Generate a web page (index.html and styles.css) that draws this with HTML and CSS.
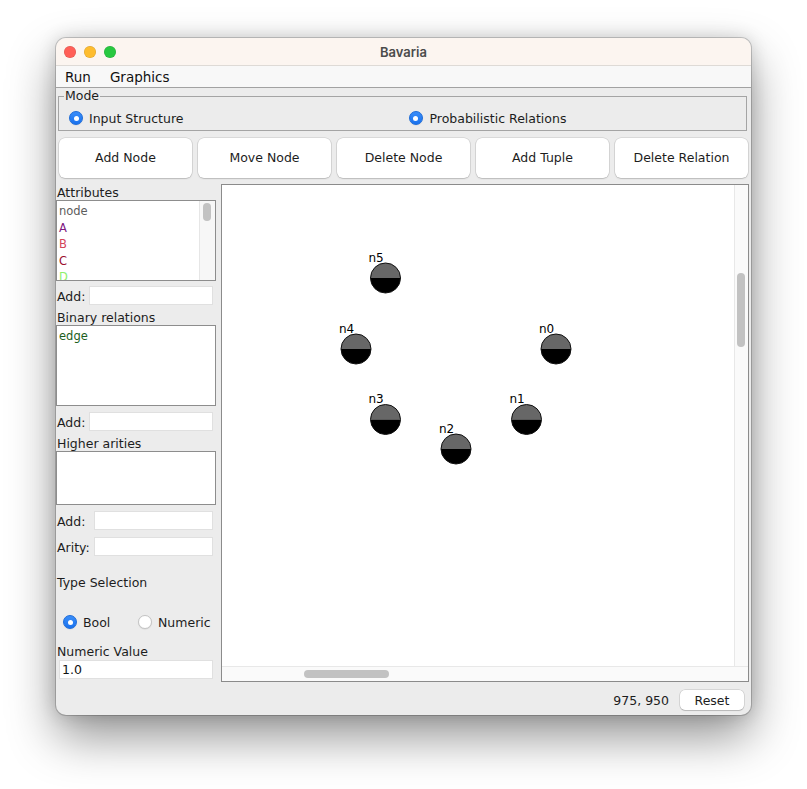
FILE: index.html
```html
<!DOCTYPE html>
<html>
<head>
<meta charset="utf-8">
<title>Bavaria</title>
<link rel="stylesheet" href="styles.css">
</head>
<body>
<div class="desk">
<div class="window">
  <div class="titlebar">
    <div class="lights">
      <span class="light red"></span>
      <span class="light yellow"></span>
      <span class="light green"></span>
    </div>
    <div class="title">Bavaria</div>
    <div></div>
  </div>
  <div class="menubar">
    <span class="menu">Run</span>
    <span class="menu">Graphics</span>
  </div>
  <div class="content">
    <fieldset class="mode">
      <legend>Mode</legend>
      <div class="mode-row">
        <div class="radio first"><span class="rb on"></span><span>Input Structure</span></div>
        <div class="radio second"><span class="rb on"></span><span>Probabilistic Relations</span></div>
      </div>
    </fieldset>
    <div class="toolbar">
      <button class="btn">Add Node</button>
      <button class="btn">Move Node</button>
      <button class="btn">Delete Node</button>
      <button class="btn">Add Tuple</button>
      <button class="btn">Delete Relation</button>
    </div>
    <div class="main">
      <div class="side">
        <div class="cap">Attributes</div>
        <div class="list list-attr">
          <div class="items">
            <div class="item c-node">node</div>
            <div class="item c-a">A</div>
            <div class="item c-b">B</div>
            <div class="item c-c">C</div>
            <div class="item c-d">D</div>
          </div>
          <div class="vtrack-s"><div class="vthumb-s"></div></div>
        </div>
        <div class="row r1"><span class="k">Add:</span><input class="tf" type="text" value=""></div>
        <div class="cap cap2">Binary relations</div>
        <div class="list list-bin">
          <div class="items">
            <div class="item c-edge">edge</div>
          </div>
        </div>
        <div class="row r2"><span class="k">Add:</span><input class="tf" type="text" value=""></div>
        <div class="cap cap2">Higher arities</div>
        <div class="list list-hi"></div>
        <div class="row r3 wide"><span class="k">Add:</span><input class="tf" type="text" value=""></div>
        <div class="row r4 wide"><span class="k">Arity:</span><input class="tf" type="text" value=""></div>
        <div class="cap cap-type">Type Selection</div>
        <div class="type-row">
          <div class="radio"><span class="rb on"></span><span>Bool</span></div>
          <div class="radio"><span class="rb"></span><span>Numeric</span></div>
        </div>
        <div class="cap cap-num">Numeric Value</div>
        <input class="tf tf-num" type="text" value="1.0">
      </div>
      <div class="canvas">
        <div class="viewport">
          <svg class="graph" width="512" height="481" viewBox="0 0 512 481">
            <defs>
              <g id="node">
                <path d="M-15,0 A15,15 0 0 1 15,0 Z" fill="#676767"/>
                <path d="M-15,0 A15,15 0 0 0 15,0 Z" fill="#000"/>
                <circle r="15" fill="none" stroke="#111" stroke-width="1"/>
              </g>
            </defs>
            <use href="#node" x="163.5" y="93"/>
            <text x="146.5" y="77">n5</text>
            <use href="#node" x="134" y="164"/>
            <text x="117" y="148">n4</text>
            <use href="#node" x="334" y="164"/>
            <text x="317" y="148">n0</text>
            <use href="#node" x="163.5" y="234.5"/>
            <text x="146.5" y="218">n3</text>
            <use href="#node" x="304.5" y="234.5"/>
            <text x="287.5" y="218">n1</text>
            <use href="#node" x="234" y="264"/>
            <text x="217" y="248">n2</text>
          </svg>
        </div>
        <div class="vtrack"><div class="vthumb"></div></div>
        <div class="htrack"><div class="hthumb"></div></div>
      </div>
    </div>
    <div class="status">
      <span class="coords">975, 950</span>
      <button class="reset">Reset</button>
    </div>
  </div>
</div>
</div>
</body>
</html>
```

FILE: styles.css
```css
* { box-sizing: border-box; }

html, body {
  margin: 0;
  background: #ffffff;
}

body {
  font-family: "DejaVu Sans", "Liberation Sans", sans-serif;
  color: #1d1d1d;
}

.desk {
  width: 807px;
  height: 789px;
  padding: 38px 0 0 56px;
  overflow: hidden;
}

.window {
  width: 695px;
  height: 677px;
  border-radius: 10px;
  background: #ececec;
  overflow: hidden;
  display: flex;
  flex-direction: column;
  box-shadow: 0 0 0 1px rgba(0,0,0,0.18), 0 22px 48px rgba(0,0,0,0.42), 0 0 18px rgba(0,0,0,0.16);
}

.titlebar {
  height: 28px;
  flex: none;
  background: #fcf5f0;
  border-bottom: 1px solid #dedad6;
  display: grid;
  grid-template-columns: 1fr auto 1fr;
  align-items: center;
}

.lights {
  display: flex;
  gap: 8px;
  padding-left: 8px;
}

.light {
  width: 12px;
  height: 12px;
  border-radius: 50%;
  box-shadow: inset 0 0 0 0.5px rgba(0,0,0,0.15);
}
.red { background: #ff5f57; }
.yellow { background: #febc2e; }
.green { background: #28c840; }

.title {
  font-family: "Inter", "DejaVu Sans", sans-serif;
  font-weight: 600;
  font-size: 13px;
  color: #4b4b4b;
}

.menubar {
  height: 22px;
  flex: none;
  background: #f8f8f8;
  border-bottom: 1px solid #a2a2a2;
  display: flex;
  align-items: center;
  gap: 19px;
  padding-left: 9px;
  font-size: 13.5px;
  color: #111;
}

.content {
  flex: 1;
  display: flex;
  flex-direction: column;
}

.mode {
  margin: 1px 4px 0 2px;
  padding: 0;
  border: 1px solid #a4a4a4;
  min-width: 0;
  font-size: 12.5px;
}

.mode legend {
  margin-left: 5px;
  padding: 0 1px;
  font-size: 12.5px;
  line-height: 14px;
}

.mode-row {
  display: grid;
  grid-template-columns: 1fr 1fr;
  height: 18px;
  margin: 6px 0 3px 0;
}

.radio {
  display: flex;
  align-items: center;
  gap: 6px;
  font-size: 12.5px;
  white-space: nowrap;
}
.mode-row .first { padding-left: 10px; }
.mode-row .second { padding-left: 6px; }
.mode-row .second .rb { margin-right: 1px; }

.rb {
  position: relative;
  width: 14px;
  height: 14px;
  border-radius: 50%;
  flex: none;
  background: #ffffff;
  border: 1px solid #c4c4c4;
  box-shadow: 0 0.5px 1px rgba(0,0,0,0.1);
}
.rb.on {
  background: linear-gradient(#3a8ef9, #1a72ee);
  border: 1px solid #1b6ad8;
}
.rb.on::after {
  content: "";
  position: absolute;
  left: 3.5px;
  top: 3.5px;
  width: 5px;
  height: 5px;
  border-radius: 50%;
  background: #ffffff;
}

.toolbar {
  display: flex;
  gap: 6px;
  margin: 7px 3px 0 3px;
  height: 40px;
  flex: none;
}

.btn {
  flex: 1;
  background: #ffffff;
  border: none;
  border-radius: 6px;
  box-shadow: 0 0 0 0.5px rgba(0,0,0,0.16), 0 1px 1.5px rgba(0,0,0,0.14);
  font-family: "DejaVu Sans", sans-serif;
  font-size: 12.5px;
  color: #1d1d1d;
  padding: 0 0 1px 0;
}

.main {
  display: flex;
  gap: 5px;
  margin: 6px 2px 0 0;
  height: 498px;
  flex: none;
}

.side {
  width: 160px;
  flex: none;
  display: flex;
  flex-direction: column;
  font-size: 12.5px;
}

.cap {
  height: 16px;
  line-height: 18px;
  padding-left: 1px;
  white-space: nowrap;
}
.cap2 { margin-top: 4px; }
.cap-type { margin-top: 18px; }
.cap-num { margin-top: 12px; }

.list {
  border: 1px solid #8d8d8d;
  background: #ffffff;
  overflow: hidden;
}
.list-attr {
  height: 81px;
  display: grid;
  grid-template-columns: 1fr 16px;
}
.list-bin { height: 81px; }
.list-hi { height: 54px; }

.items {
  padding: 2px 0 0 2px;
  overflow: hidden;
}
.item {
  font-size: 11.5px;
  line-height: 16.5px;
  height: 16.5px;
}
.c-node { color: #5c5c5c; }
.c-a { color: #7e1780; }
.c-b { color: #d3455a; }
.c-c { color: #9c0d2e; }
.c-d { color: #8ef06c; }
.c-edge { color: #1c5e1c; }

.vtrack-s {
  background: #f7f7f7;
  border-left: 1px solid #e6e6e6;
  padding: 2px 0 0 3px;
}
.vthumb-s {
  width: 8px;
  height: 18px;
  border-radius: 4px;
  background: #c2c2c2;
}

.row {
  display: flex;
  align-items: center;
  height: 19px;
}
.r1 { margin-top: 5px; }
.r2 { margin-top: 6px; }
.r3 { margin-top: 6px; }
.r4 { margin-top: 7px; }
.row .k {
  width: 33px;
  flex: none;
  padding-left: 1px;
  padding-top: 1px;
}
.row.wide .k { width: 38px; }

.tf {
  flex: 1;
  min-width: 0;
  height: 19px;
  margin: 0 3.5px 0 0;
  border: 1px solid #e0e0e0;
  background: #ffffff;
  font-family: "DejaVu Sans", sans-serif;
  font-size: 12.5px;
  color: #111;
  padding: 0 2px;
  outline: none;
}
.tf-num {
  flex: none;
  margin: 1px 3.5px 0 3px;
}

.type-row {
  display: grid;
  grid-template-columns: 75px auto;
  height: 18px;
  margin-top: 23px;
  padding-left: 7px;
}

.canvas {
  flex: 1;
  border: 1px solid #8b8b8b;
  background: #ffffff;
  display: grid;
  grid-template-columns: 1fr 14px;
  grid-template-rows: 1fr 15px;
  overflow: hidden;
}

.viewport {
  overflow: hidden;
}

.graph {
  display: block;
}
.graph text {
  font-family: "DejaVu Sans", sans-serif;
  font-size: 12px;
  fill: #000;
}

.vtrack {
  background: #fafafa;
  border-left: 1px solid #e8e8e8;
  padding: 88px 0 0 2px;
}
.vthumb {
  width: 8px;
  height: 74px;
  border-radius: 4px;
  background: #c2c2c2;
}

.htrack {
  grid-column: 1 / -1;
  background: #fafafa;
  border-top: 1px solid #e8e8e8;
  padding: 3px 0 0 82px;
}
.hthumb {
  width: 85px;
  height: 8px;
  border-radius: 4px;
  background: #c2c2c2;
}

.status {
  flex: 1;
  display: flex;
  justify-content: flex-end;
  align-items: center;
  gap: 11px;
  padding: 3px 7px 0 0;
  font-size: 12.5px;
}

.reset {
  width: 64px;
  height: 20px;
  background: #ffffff;
  border: none;
  border-radius: 5px;
  box-shadow: 0 0 0 0.5px rgba(0,0,0,0.18), 0 1px 1px rgba(0,0,0,0.14);
  font-family: "DejaVu Sans", sans-serif;
  font-size: 12.5px;
  color: #1d1d1d;
  padding: 0;
}
```
